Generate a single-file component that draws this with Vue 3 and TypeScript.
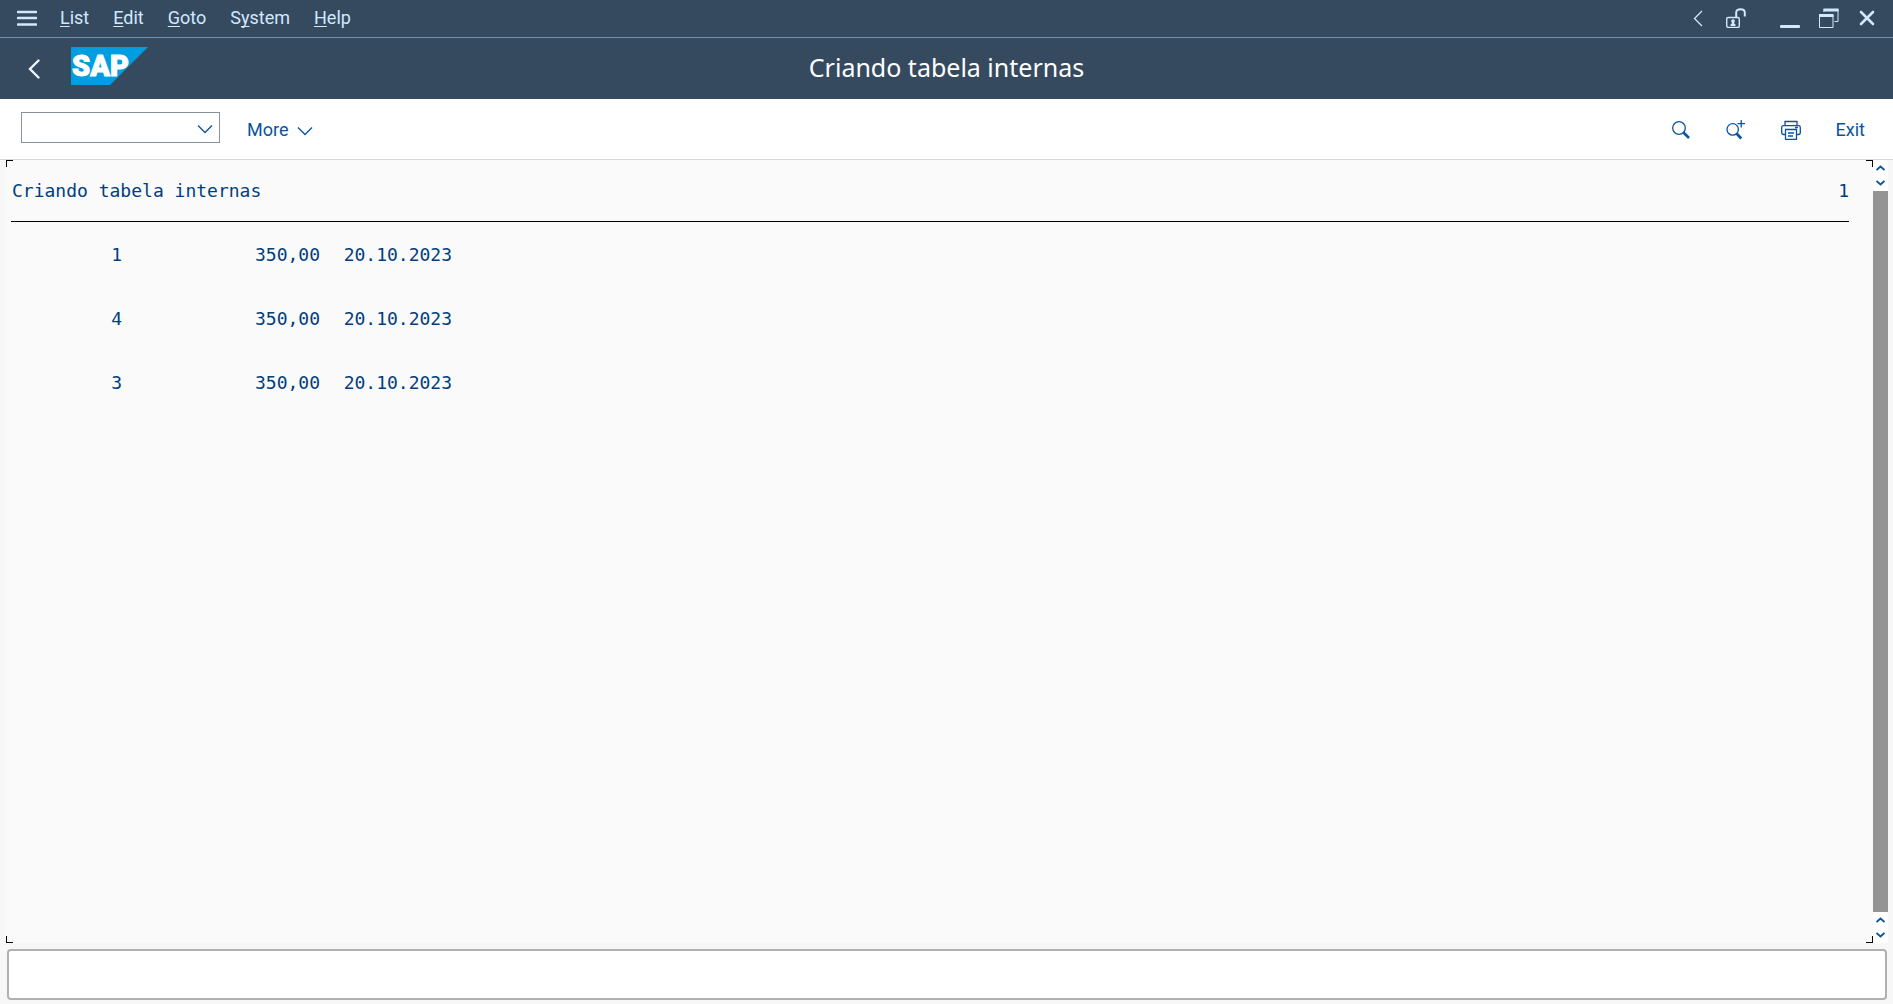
<script setup lang="ts">
import { ref } from 'vue'

interface MenuItem {
  before: string
  key: string
  after: string
}

interface ListRow {
  id: string
  amount: string
  date: string
}

const menus: MenuItem[] = [
  { before: '', key: 'L', after: 'ist' },
  { before: '', key: 'E', after: 'dit' },
  { before: '', key: 'G', after: 'oto' },
  { before: 'S', key: 'y', after: 'stem' },
  { before: '', key: 'H', after: 'elp' },
]

const rows: ListRow[] = [
  { id: '1', amount: '350,00', date: '20.10.2023' },
  { id: '4', amount: '350,00', date: '20.10.2023' },
  { id: '3', amount: '350,00', date: '20.10.2023' },
]

const title = 'Criando tabela internas'
const command = ref('')
</script>

<template>
  <div class="screen">
    <nav class="menubar" aria-label="Menu">
      <button class="icon-btn burger" aria-label="Menu">
        <svg width="20" height="16" viewBox="0 0 20 16">
          <path d="M1 2H19M1 8H19M1 14.500H19" stroke="currentColor" stroke-width="2.600" stroke-linecap="round" />
        </svg>
      </button>
      <button v-for="m in menus" :key="m.key" class="menu">{{ m.before }}<span class="key">{{ m.key }}</span>{{ m.after }}</button>
      <div class="window-tools">
        <button class="icon-btn" aria-label="Collapse">
          <svg width="10" height="20" viewBox="0 0 10 20">
            <path d="M9 3L1.500 10.500L9 18" fill="none" stroke="currentColor" stroke-width="1.300" />
          </svg>
        </button>
        <button class="icon-btn lock" aria-label="Unlocked">
          <svg width="20" height="20" viewBox="0 0 20 20" fill="none" stroke="currentColor">
            <rect x="0.700" y="9.500" width="12.600" height="10" rx="1.500" stroke-width="1.400" />
            <path d="M10.200 9.500V4.500Q10.200 1.200 14.500 1.200Q18.800 1.200 18.800 4.500V8.500" stroke-width="2" />
            <path d="M7 11.300A1.900 1.900 0 0 1 8.200 14.600L8.400 16H9.400V18H4.600V16H5.600L5.800 14.600A1.900 1.900 0 0 1 7 11.300Z" fill="currentColor" stroke="none" />
          </svg>
        </button>
        <button class="icon-btn minimize" aria-label="Minimize">
          <svg width="20" height="20" viewBox="0 0 20 20">
            <rect x="0" y="17" width="20" height="3" rx="1" fill="currentColor" />
          </svg>
        </button>
        <button class="icon-btn restore" aria-label="Restore">
          <svg width="20" height="20" viewBox="0 0 20 20" fill="none" stroke="currentColor">
            <path d="M0.500 7V19.500H14V7" />
            <path d="M0 7.500H14.500M4.500 2H19.500" stroke-width="3" />
            <path d="M5 1V4M19 1V13.500H15.500" />
          </svg>
        </button>
        <button class="icon-btn close" aria-label="Close">
          <svg width="16" height="16" viewBox="0 0 16 16">
            <path d="M2 2L14 14M14 2L2 14" stroke="currentColor" stroke-width="2.600" stroke-linecap="round" />
          </svg>
        </button>
      </div>
    </nav>

    <header class="header">
      <div class="brand">
        <button class="icon-btn back" aria-label="Back">
          <svg width="12" height="20" viewBox="0 0 12 20">
            <path d="M10.500 1.500L2 10L10.500 18.500" fill="none" stroke="currentColor" stroke-width="2.400" stroke-linecap="round" />
          </svg>
        </button>
        <svg class="logo" width="77" height="38" viewBox="0 0 77 38" role="img" aria-label="SAP">
          <path d="M0 0H77L39 38H0Z" fill="#009de0" />
          <text x="1" y="29" class="logo-text">SAP</text>
        </svg>
      </div>
      <h1>{{ title }}</h1>
    </header>

    <div class="toolbar">
      <label class="combo">
        <select v-model="command" aria-label="Command">
          <option value=""></option>
        </select>
        <svg width="16" height="10" viewBox="0 0 16 10">
          <path d="M1 1.500L8 8.500L15 1.500" fill="none" stroke="currentColor" stroke-width="1.300" />
        </svg>
      </label>
      <button class="action more">
        More
        <svg width="16" height="10" viewBox="0 0 16 10">
          <path d="M1 1.500L8 8.500L15 1.500" fill="none" stroke="currentColor" stroke-width="1.300" />
        </svg>
      </button>
      <div class="actions">
        <button class="icon-btn" aria-label="Find">
          <svg width="20" height="20" viewBox="0 0 20 20" fill="none" stroke="currentColor">
            <circle cx="8" cy="8" r="6.300" stroke-width="1.300" />
            <path d="M12.500 12.500L18 18" stroke-width="2.600" />
          </svg>
        </button>
        <button class="icon-btn" aria-label="Find next">
          <svg width="20" height="20" viewBox="0 0 20 20" fill="none" stroke="currentColor">
            <circle cx="6.700" cy="9.400" r="5.700" stroke-width="1.300" />
            <path d="M15.200 0V7.400M11.500 3.700H19" stroke-width="1.300" />
            <path d="M10.500 13.500L15.300 18.500" stroke-width="2.600" />
          </svg>
        </button>
        <button class="icon-btn" aria-label="Print">
          <svg width="20" height="20" viewBox="0 0 20 20" fill="none" stroke="currentColor" stroke-width="1.300">
            <path d="M4 5.500V1.500H16V5.500M4.500 14.500H2.500Q0.700 14.500 0.700 12.500V7.500Q0.700 5.700 2.500 5.700H17.500Q19.300 5.700 19.300 7.500V12.500Q19.300 14.500 17.500 14.500H15.500" />
            <path d="M4.500 9.500H15.500V19.300H4.500ZM7 13H13M7 16H12M14 7.500H17" />
          </svg>
        </button>
        <button class="action">Exit</button>
      </div>
    </div>

    <div class="body">
      <main class="list">
        <i class="corner tl"></i><i class="corner tr"></i><i class="corner bl"></i><i class="corner br"></i>
        <div class="list-head"><span>{{ title }}</span><span>1</span></div>
        <table>
          <tbody>
            <tr v-for="r in rows" :key="r.id">
              <td class="id">{{ r.id }}</td>
              <td class="amount">{{ r.amount }}</td>
              <td class="date">{{ r.date }}</td>
            </tr>
          </tbody>
        </table>
      </main>
      <div class="scroll">
        <div class="arrows">
          <button class="icon-btn" aria-label="Page up"><svg width="9" height="6" viewBox="0 0 9 6"><path d="M0.500 5L4.500 1.500L8.500 5" /></svg></button>
          <button class="icon-btn" aria-label="Line up"><svg width="9" height="6" viewBox="0 0 9 6"><path d="M0.500 1L4.500 4.500L8.500 1" /></svg></button>
        </div>
        <div class="thumb"></div>
        <div class="arrows">
          <button class="icon-btn" aria-label="Line down"><svg width="9" height="6" viewBox="0 0 9 6"><path d="M0.500 5L4.500 1.500L8.500 5" /></svg></button>
          <button class="icon-btn" aria-label="Page down"><svg width="9" height="6" viewBox="0 0 9 6"><path d="M0.500 1L4.500 4.500L8.500 1" /></svg></button>
        </div>
      </div>
    </div>

    <footer class="status" role="status"></footer>
  </div>
</template>

<style>
body {
  background: #f7f7f7;
}
</style>

<style scoped>
* {
  box-sizing: border-box;
}
.screen {
  display: flex;
  flex-direction: column;
  min-height: 100vh;
  font-family: Roboto, "Liberation Sans", sans-serif;
  font-size: 18px;
}
button {
  padding: 0;
  border: 0;
  background: none;
  color: inherit;
  font: inherit;
  cursor: pointer;
}
svg {
  display: block;
}
.icon-btn {
  display: flex;
  align-items: center;
  justify-content: center;
}
.menubar {
  display: flex;
  align-items: center;
  height: 38px;
  padding: 0 18px 2px 17px;
  border-bottom: 1px solid #6f93b5;
  background: #354a5f;
  color: #d1e8ff;
}
.burger {
  margin-right: 23px;
}
.menu {
  margin-right: 24px;
  line-height: 20px;
}
.key {
  text-decoration: underline;
  text-decoration-skip-ink: none;
  text-decoration-thickness: 1px;
  text-underline-offset: 2px;
}
.window-tools {
  display: flex;
  align-items: center;
  margin-left: auto;
}
.lock {
  margin-left: 23px;
}
.minimize {
  margin-left: 34px;
}
.restore {
  margin-left: 19px;
}
.close {
  margin-left: 20px;
}
.header {
  display: grid;
  grid-template-columns: 1fr auto 1fr;
  align-items: center;
  height: 61px;
  background: #354a5f;
  color: #ffffff;
}
.brand {
  display: flex;
  align-items: center;
  padding-left: 28px;
}
.back {
  margin-right: 31px;
  color: #eaf4ff;
}
.logo {
  margin-bottom: 5px;
}
.logo-text {
  fill: #ffffff;
  stroke: #ffffff;
  stroke-width: 1px;
  font: 900 29px Roboto, "Liberation Sans", sans-serif;
}
h1 {
  margin: 0;
  padding-bottom: 4px;
  font: 400 25px/32px "Noto Sans", sans-serif;
}
.toolbar {
  display: flex;
  align-items: center;
  height: 61px;
  padding: 2px 28px 0 21px;
  border-bottom: 1px solid #d9d9d9;
  background: #ffffff;
  color: #0854a0;
}
.combo {
  position: relative;
  width: 199px;
  margin-bottom: 6px;
}
.combo select {
  display: block;
  width: 100%;
  height: 31px;
  border: 1px solid #89919a;
  border-radius: 0;
  background: #ffffff;
  appearance: none;
  font: inherit;
}
.combo svg {
  position: absolute;
  top: 12px;
  right: 7px;
  pointer-events: none;
}
.action {
  display: flex;
  align-items: center;
  gap: 9px;
  line-height: 24px;
}
.action svg {
  margin-top: 2px;
}
.more {
  margin-left: 27px;
}
.actions {
  display: flex;
  align-items: center;
  gap: 35px;
  margin-left: auto;
}
.body {
  display: flex;
  flex: 1;
  padding: 0 5px 0 6px;
}
.list {
  position: relative;
  flex: 1;
  padding: 15px 24px 24px 5px;
  background: #fafafa;
  color: #003e7e;
  font: 18px/32px "DejaVu Sans Mono", monospace;
}
.list-head {
  display: flex;
  justify-content: space-between;
  height: 47px;
  padding-left: 1px;
  border-bottom: 1px solid #000000;
}
table {
  margin-top: -15px;
  border-collapse: separate;
  border-spacing: 0 32px;
}
td {
  padding: 0;
  text-align: right;
}
.id {
  width: 111px;
}
.amount {
  width: 198px;
}
.date {
  width: 132px;
}
.corner {
  position: absolute;
  width: 7px;
  height: 7px;
  border: 0 solid #000000;
}
.tl {
  top: 0;
  left: 0;
  border-width: 1px 0 0 1px;
}
.tr {
  top: 0;
  right: 0;
  border-width: 1px 1px 0 0;
}
.bl {
  bottom: 0;
  left: 0;
  border-width: 0 0 1px 1px;
}
.br {
  right: 0;
  bottom: 0;
  border-width: 0 1px 1px 0;
}
.scroll {
  display: flex;
  flex-direction: column;
  width: 15px;
  background: #ffffff;
}
.arrows {
  display: flex;
  flex-direction: column;
  align-items: center;
  justify-content: center;
  gap: 9px;
  height: 31px;
}
.arrows path {
  fill: none;
  stroke: #0854a0;
  stroke-width: 1.8;
}
.thumb {
  flex: 1;
  background: #949494;
}
.status {
  height: 51px;
  margin: 6px 6px 4px 7px;
  border: 2px solid #b0b0b0;
  border-radius: 4px;
  background: #ffffff;
}
</style>
